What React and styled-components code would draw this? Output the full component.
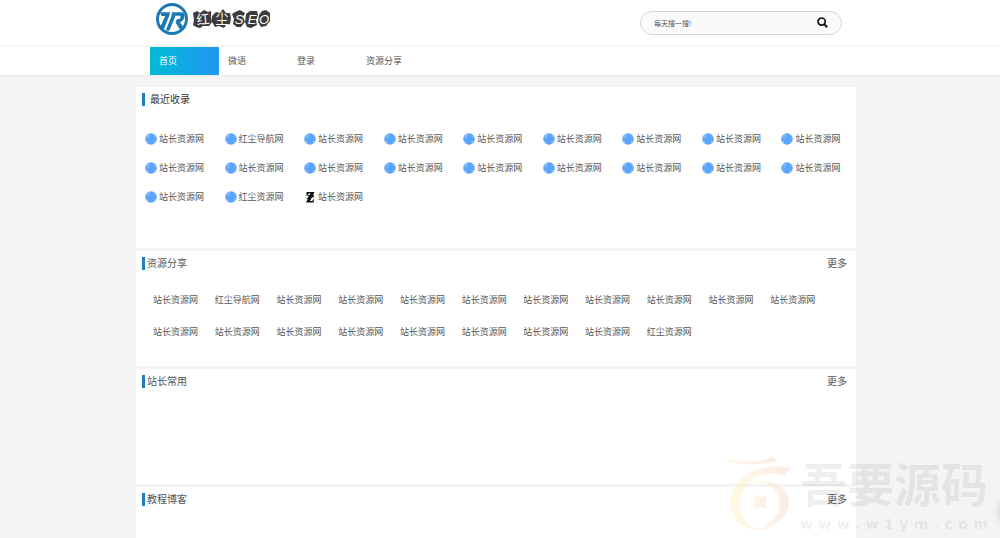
import styled, { createGlobalStyle } from 'styled-components';

const GlobalStyle = createGlobalStyle`
  * {
    box-sizing: border-box;
  }

  body {
    margin: 0;
    background: #f4f4f4;
    color: #555555;
    font-family: "Noto Sans CJK SC", "Liberation Sans", sans-serif;
    font-size: 9px;
    line-height: 14px;
  }

  a {
    color: inherit;
    text-decoration: none;
  }
`;

// === Page ===
const Page = styled.div`
  position: relative;
  height: 100vh;
  overflow: hidden;
`;

const Header = styled.header`
  background: #ffffff;
  padding-right: 8px;
`;

const HeaderInner = styled.div`
  display: flex;
  align-items: center;
  justify-content: space-between;
  max-width: 720px;
  height: 45px;
  margin: 0 auto;
  padding: 0 14px 0 19px;
`;

const LogoLink = styled.a`
  display: flex;
  margin-top: -8px;
`;

const SearchForm = styled.form`
  display: flex;
  align-items: center;
  width: 202px;
  height: 24px;
  padding: 0 13px;
  background: #fafafa;
  border: 1px solid #d6d6d6;
  border-radius: 12px;
`;

const SearchInput = styled.input`
  flex: 1;
  min-width: 0;
  padding: 0;
  border: 0;
  outline: 0;
  background: transparent;
  color: #555555;
  font-family: inherit;
  font-size: 7px;

  &::placeholder {
    color: #555555;
    opacity: 1;
  }
`;

const SearchButton = styled.button`
  display: flex;
  padding: 0;
  border: 0;
  background: transparent;
  cursor: pointer;
`;

// === Navigation ===
const Nav = styled.nav`
  padding-right: 8px;
  background: #ffffff;
  border-top: 2px solid #f5f5f5;
  box-shadow: 0 1px 2px rgba(0, 0, 0, 0.04);
`;

const NavList = styled.ul`
  display: flex;
  max-width: 720px;
  margin: 0 auto;
  padding: 0 14px;
  list-style: none;
`;

const NavLink = styled.a`
  display: block;
  width: 69px;
  padding-left: 9px;
  line-height: 28px;
  color: ${({ $active }) => ($active ? '#ffffff' : '#555555')};
  background: ${({ $active }) =>
    $active ? 'linear-gradient(to right, #00bcd4, #2196f3)' : 'none'};
`;

// === Sections ===
const Main = styled.main`
  padding: 12px 8px 0 0;
`;

const Sections = styled.div`
  display: flex;
  flex-direction: column;
  gap: 3px;
  max-width: 720px;
  margin: 0 auto;
`;

const Card = styled.section`
  min-height: ${({ $tall }) => ($tall ? '161px' : '115px')};
  padding-top: 6px;
  background: #ffffff;
`;

const CardHead = styled.div`
  display: flex;
  justify-content: space-between;
  padding: 0 9px 0 6px;
  font-size: 10px;
  line-height: 12px;
`;

const CardTitle = styled.h2`
  margin: 0;
  padding: 0 0 1px ${({ $main }) => ($main ? '5px' : '2px')};
  border-left: 3px solid #1c7fb9;
  color: ${({ $main }) => ($main ? '#333333' : '#555555')};
  font-size: 10px;
  font-weight: 400;
`;

const SiteGrid = styled.ul`
  display: grid;
  grid-template-columns: repeat(9, 1fr);
  margin: 18px 0 0;
  padding: 0 0 0 4px;
  list-style: none;
`;

const SiteLink = styled.a`
  display: flex;
  align-items: center;
  gap: 2px;
  padding-left: 5px;
  line-height: 29px;
  white-space: nowrap;
`;

const TextGrid = styled.ul`
  display: grid;
  grid-template-columns: repeat(11, 1fr);
  margin: 14px 0 0;
  padding: 0 24px 0 17px;
  list-style: none;
  line-height: 32px;
  white-space: nowrap;
`;

// === Floating parts ===
const Watermark = styled.div`
  position: absolute;
  right: 12px;
  bottom: 6px;
  display: flex;
  align-items: center;
  gap: 8px;
  pointer-events: none;
`;

const WatermarkText = styled.div`
  width: 188px;
  color: rgba(0, 0, 0, 0.08);
`;

const WatermarkName = styled.div`
  font-size: 47px;
  font-weight: 700;
  line-height: 56px;
  padding-bottom: 6px;
`;

const WatermarkUrl = styled.div`
  display: flex;
  justify-content: space-between;
  font-family: "DejaVu Sans", sans-serif;
  font-size: 14px;
  font-weight: 700;
  line-height: 16px;
`;

const SideShadow = styled.div`
  position: absolute;
  right: -26px;
  bottom: 15px;
  width: 24px;
  height: 24px;
  border-radius: 50%;
  box-shadow: 0 0 9px 3px rgba(0, 0, 0, 0.16);
`;

const navItems = ['首页', '微语', '登录', '资源分享'];

const recentSites = Array.from({ length: 21 }, (_, i) => {
  if (i === 1) return '红尘导航网';
  if (i === 19) return '红尘资源网';
  return '站长资源网';
});

const sharedSites = Array.from({ length: 20 }, (_, i) => {
  if (i === 1) return '红尘导航网';
  if (i === 19) return '红尘资源网';
  return '站长资源网';
});

function Logo() {
  return (
    <svg width="116" height="34" viewBox="0 0 116 34" role="img" aria-label="红尘SEO">
      <circle cx="17" cy="17" r="14.5" fill="none" stroke="#1b78b5" strokeWidth="3" />
      <path d="M5 10.200H15.200L14.200 14L8.500 28L5.200 25L10.200 14H6.500Z" fill="#1b78b5" />
      <path
        d="M17 10.200H26C29.500 10.200 30 13 29 16C28.300 18.500 27 19.800 24.800 20L29 26L25.500 28.500L20.500 20.500L22 17H24C25.500 17 26.200 13.700 24.500 13.700H20.500L14.500 28.500H10.800L16.300 14.500Z"
        fill="#1b78b5"
      />
      <g fill="#3c3c3c">
        <path d="M38 11L42 9L45 11L49 8L53 10L56 9L56 15L57 20L54 24L48 24L45 26L41 25L38 23L39 18Z" />
        <path d="M57 14L61 10L65 11L68 7L71 11L75 11L76 16L75 22L71 23L69 26L64 24L60 25L57 20Z" />
        <path d="M77 12L80 10L85 8L90 11L88 15L90 20L86 25L82 25L78 22L79 17Z" />
        <path d="M91 12L95 9L102 9L103 13L101 18L102 23L96 26L92 25L90 20Z" />
        <path d="M104 13L107 9L111 8L115 11L115 19L111 24L106 25L103 20Z" />
      </g>
      <g fill="#ffffff" fontSize="13" textAnchor="middle">
        <text x="48" y="22" transform="rotate(-6 48 17)">红</text>
        <text x="67" y="21">尘</text>
        <g fontFamily="Liberation Sans" fontStyle="italic">
          <text x="84" y="22">S</text>
          <text x="97" y="22">E</text>
          <text x="109" y="22">O</text>
        </g>
      </g>
    </svg>
  );
}

function SearchIcon() {
  return (
    <svg width="11" height="11" viewBox="0 0 11 11" aria-hidden="true">
      <circle cx="4.600" cy="4.600" r="3.600" fill="none" stroke="#111111" strokeWidth="1.700" />
      <path d="M7.200 7.200L10.200 10.200" stroke="#111111" strokeWidth="2" />
    </svg>
  );
}

function GlobeIcon() {
  return (
    <svg width="12" height="12" viewBox="0 0 12 12" aria-hidden="true">
      <circle cx="6" cy="6" r="5.800" fill="#5aa4fc" />
      <path d="M1.500 3L4 1.200L5.500 2L4.500 3.500L2.500 4.500L1.200 5.500Z" fill="#86bcff" />
      <path d="M3 5L4 4.500L4.500 5.500L3.500 6Z" fill="#86bcff" />
      <path d="M8.500 1.200L10.500 3L11 5L9 3.500Z" fill="#78b4ff" />
      <path d="M1 7.500L3 8.500L3.500 10.500L2 9.800Z" fill="#8cc0ff" />
      <path d="M9 8L10.500 7.500L9.500 9.800L8 10.500Z" fill="#86bcff" />
    </svg>
  );
}

function ZIcon() {
  return (
    <svg width="12" height="12" viewBox="0 0 12 12" aria-hidden="true">
      <path d="M2.500 1H10.500L6 10H8.200L10.200 7.500L9.500 11.500H2L6.500 2.500H5L2.500 5Z" fill="#111111" />
      <path d="M3 4.200L9.500 3.800L10 6L4 8L2 7.500L5 6Z" fill="#111111" />
    </svg>
  );
}

function WatermarkMark() {
  return (
    <svg width="66" height="76" viewBox="0 0 66 76" aria-hidden="true">
      <defs>
        <linearGradient id="mark" x1="0" y1="0" x2="1" y2="0">
          <stop offset="0" stopColor="#fff3bf" />
          <stop offset="1" stopColor="#f9cfc4" />
        </linearGradient>
      </defs>
      <g fill="url(#mark)" opacity="0.4">
        <path d="M0 3C15 8 31 7 47 2L51 6C34 10 17 11 1 6Z" />
        <path d="M65 13C44 7 17 16 7 34C-2 54 10 70 27 73C12 64 10 46 19 32C27 19 43 15 58 21Z" />
        <path d="M29 27C46 23 63 32 63 47C63 61 50 72 35 72C50 66 56 56 53 43C50 32 41 28 29 27Z" />
        <path d="M5 47C7 60 18 70 31 73C43 75 51 66 54 57C50 73 36 78 23 73C10 69 3 59 5 47Z" />
        <path d="M28 39Q35 44 41 41Q38 48 41 54Q34 50 27 54Q30 46 28 39Z" />
      </g>
    </svg>
  );
}

function SectionCard({ title, children }) {
  return (
    <Card>
      <CardHead>
        <CardTitle>{title}</CardTitle>
        <a href="#more">更多</a>
      </CardHead>
      {children}
    </Card>
  );
}

export default function App() {
  return (
    <Page lang="zh-CN">
      <GlobalStyle />
      <Header>
        <HeaderInner>
          <LogoLink href="#home">
            <Logo />
          </LogoLink>
          <SearchForm role="search">
            <SearchInput type="text" aria-label="搜索" placeholder="每天搜一搜!" />
            <SearchButton type="submit" aria-label="搜索">
              <SearchIcon />
            </SearchButton>
          </SearchForm>
        </HeaderInner>
      </Header>
      <Nav>
        <NavList>
          {navItems.map((item, index) => (
            <li key={item}>
              <NavLink href={`#nav-${index}`} $active={index === 0}>
                {item}
              </NavLink>
            </li>
          ))}
        </NavList>
      </Nav>

      <Main>
        <Sections>
          <Card $tall>
            <CardHead>
              <CardTitle $main>最近收录</CardTitle>
            </CardHead>
            <SiteGrid>
              {recentSites.map((name, index) => (
                <li key={index}>
                  <SiteLink href={`#site-${index}`}>
                    {index === 20 ? <ZIcon /> : <GlobeIcon />}
                    {name}
                  </SiteLink>
                </li>
              ))}
            </SiteGrid>
          </Card>

          <SectionCard title="资源分享">
            <TextGrid>
              {sharedSites.map((name, index) => (
                <li key={index}>
                  <a href={`#share-${index}`}>{name}</a>
                </li>
              ))}
            </TextGrid>
          </SectionCard>
          <SectionCard title="站长常用" />
          <SectionCard title="教程博客" />
        </Sections>
      </Main>

      <Watermark>
        <WatermarkMark />
        <WatermarkText>
          <WatermarkName>吾要源码</WatermarkName>
          <WatermarkUrl>
            {'www.w1ym.com'.split('').map((char, index) => (
              <span key={index}>{char}</span>
            ))}
          </WatermarkUrl>
        </WatermarkText>
      </Watermark>
      <SideShadow />
    </Page>
  );
}
